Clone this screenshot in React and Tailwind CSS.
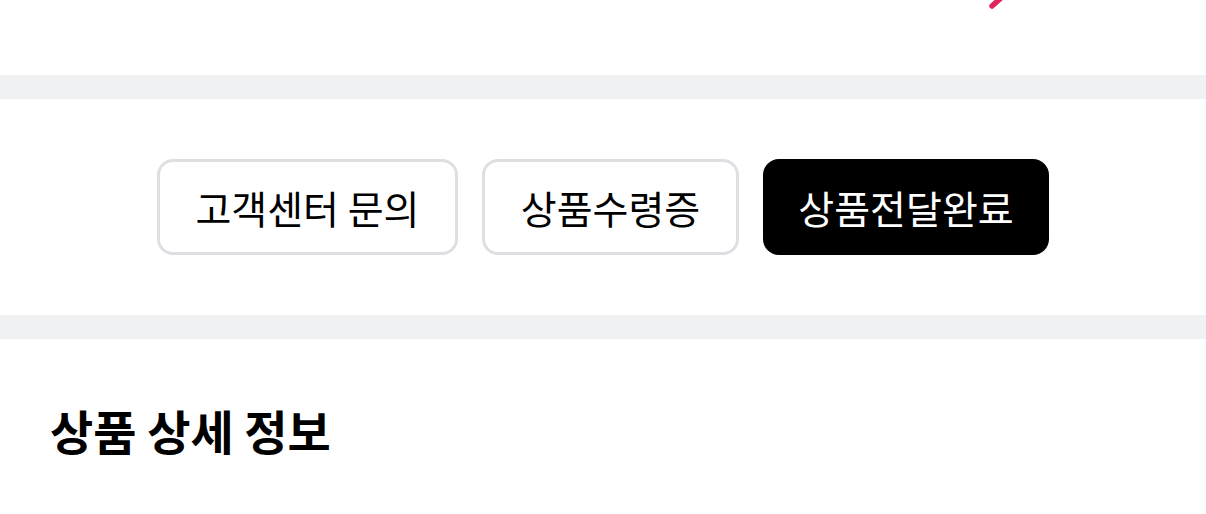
import React from 'react';

const actions = [
  { label: '고객센터 문의', primary: false, w: 'w-[301px]' },
  { label: '상품수령증', primary: false, w: 'w-[257px]' },
  { label: '상품전달완료', primary: true, w: 'w-[286px]' },
];

export default function App() {
  return (
    <div className="w-full bg-white" style={{ fontFamily: '"Noto Sans CJK KR", "Noto Sans", sans-serif' }}>
      {/* top area (cut off) */}
      <div className="relative h-[75px] bg-white">
        <svg className="absolute left-[986px] top-0" width="20" height="10" viewBox="0 0 20 10">
          <path d="M6 6 L15 -2" stroke="#e0245e" strokeWidth="5.5" strokeLinecap="round" fill="none" />
        </svg>
      </div>

      <div className="h-[24px] bg-[#f0f1f3]" />

      {/* action buttons */}
      <div className="flex justify-center gap-[24px] py-[60px]">
        {actions.map((a) => (
          <button
            key={a.label}
            className={
              a.primary
                ? `${a.w} h-[96px] rounded-[16px] bg-black text-white border-[3px] border-black text-[39px] leading-none`
                : `${a.w} h-[96px] rounded-[16px] bg-white text-black border-[3px] border-[#dfdfe3] text-[39px] leading-none`
            }
          >
            {a.label}
          </button>
        ))}
      </div>

      <div className="h-[24px] bg-[#f0f1f3]" />

      {/* product details */}
      <div className="px-[50px] pt-[67px] pb-[40px]">
        <h2 className="text-[47px] font-bold text-black leading-none">상품 상세 정보</h2>
      </div>
    </div>
  );
}
